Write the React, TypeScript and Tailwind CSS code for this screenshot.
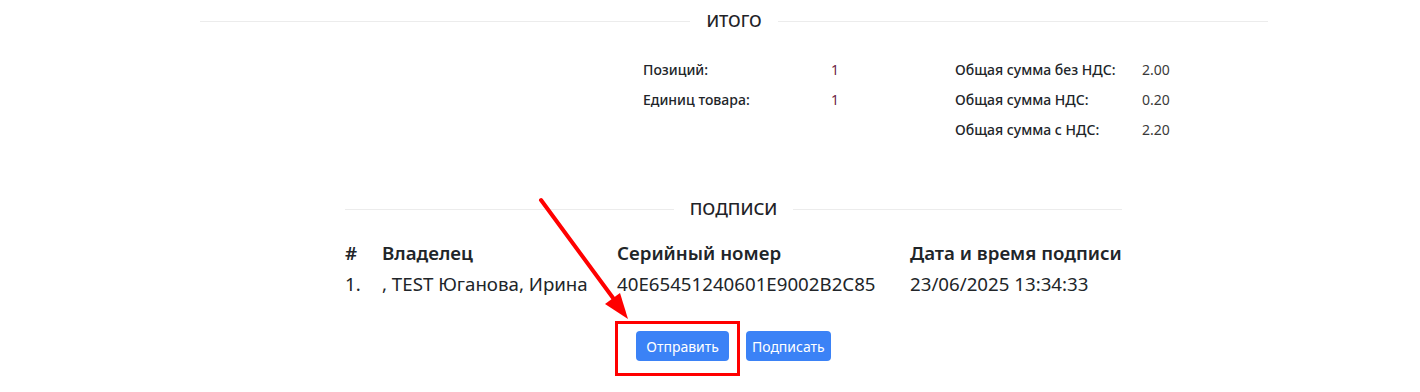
const totalsLeft = [
  { label: "Позиций:", value: "1" },
  { label: "Единиц товара:", value: "1" },
];

const totalsRight = [
  { label: "Общая сумма без НДС:", value: "2.00" },
  { label: "Общая сумма НДС:", value: "0.20" },
  { label: "Общая сумма с НДС:", value: "2.20" },
];

const signatures = [
  {
    n: "1.",
    owner: ", TEST Юганова, Ирина",
    serial: "40E65451240601E9002B2C85",
    date: "23/06/2025 13:34:33",
  },
];

function SectionTitle({ title, size }: { title: string; size: string }) {
  return (
    <div className="flex items-center">
      <div className="h-px flex-1 bg-[#ececec]" />
      <div className={`px-[16px] font-medium leading-5 text-[#1f2328] ${size}`}>{title}</div>
      <div className="h-px flex-1 bg-[#ececec]" />
    </div>
  );
}

export default function App() {
  return (
    <div className="relative h-[392px] w-[1420px] overflow-hidden bg-white font-['Noto_Sans',sans-serif] text-[#212529]">
      <div className="ml-[200px] w-[1068px] pt-[11px]">
        <SectionTitle title="ИТОГО" size="text-[16.5px]" />

        <div className="mt-[28px] flex pl-[443px] text-[14px]">
          <div className="flex w-[312px] flex-col gap-[10px]">
            {totalsLeft.map((row) => (
              <div key={row.label} className="flex h-5 items-center">
                <span className="w-[188px] font-medium">{row.label}</span>
                <span className="text-[#6d1f45]">{row.value}</span>
              </div>
            ))}
          </div>
          <div className="flex flex-col gap-[10px]">
            {totalsRight.map((row) => (
              <div key={row.label} className="flex h-5 items-center">
                <span className="w-[187px] font-medium">{row.label}</span>
                <span className="text-[#3a3a3a]">{row.value}</span>
              </div>
            ))}
          </div>
        </div>
      </div>

      <div className="ml-[345px] mt-[60px] w-[777px]">
        <SectionTitle title="ПОДПИСИ" size="text-[17px]" />

        <table className="mt-[19px] text-left text-[18.7px]">
          <thead>
            <tr className="h-[30px]">
              <th className="w-[37px] font-semibold">#</th>
              <th className="w-[235px] font-semibold">Владелец</th>
              <th className="w-[293px] font-semibold">Серийный номер</th>
              <th className="font-semibold">Дата и время подписи</th>
            </tr>
          </thead>
          <tbody>
            {signatures.map((s) => (
              <tr key={s.serial} className="h-[33px]">
                <td>{s.n}</td>
                <td>{s.owner}</td>
                <td>{s.serial}</td>
                <td>{s.date}</td>
              </tr>
            ))}
          </tbody>
        </table>

        <div className="mt-[30px] flex justify-center gap-[17px]">
          <button className="h-[30px] rounded-[4px] bg-[#3b82f6] px-[10px] text-[14px] text-white">
            Отправить
          </button>
          <button className="h-[30px] rounded-[4px] bg-[#3b82f6] px-[6px] text-[14px] text-white">
            Подписать
          </button>
        </div>
      </div>

      <svg className="pointer-events-none absolute inset-0" width="1420" height="392">
        <line x1="541" y1="200" x2="616" y2="302" stroke="#ff0000" strokeWidth="4" strokeLinecap="round" />
        <polygon points="628,319 605,304 620,293" fill="#ff0000" />
        <rect x="616.5" y="322.5" width="122" height="52" fill="none" stroke="#ff0000" strokeWidth="3" />
      </svg>
    </div>
  );
}
